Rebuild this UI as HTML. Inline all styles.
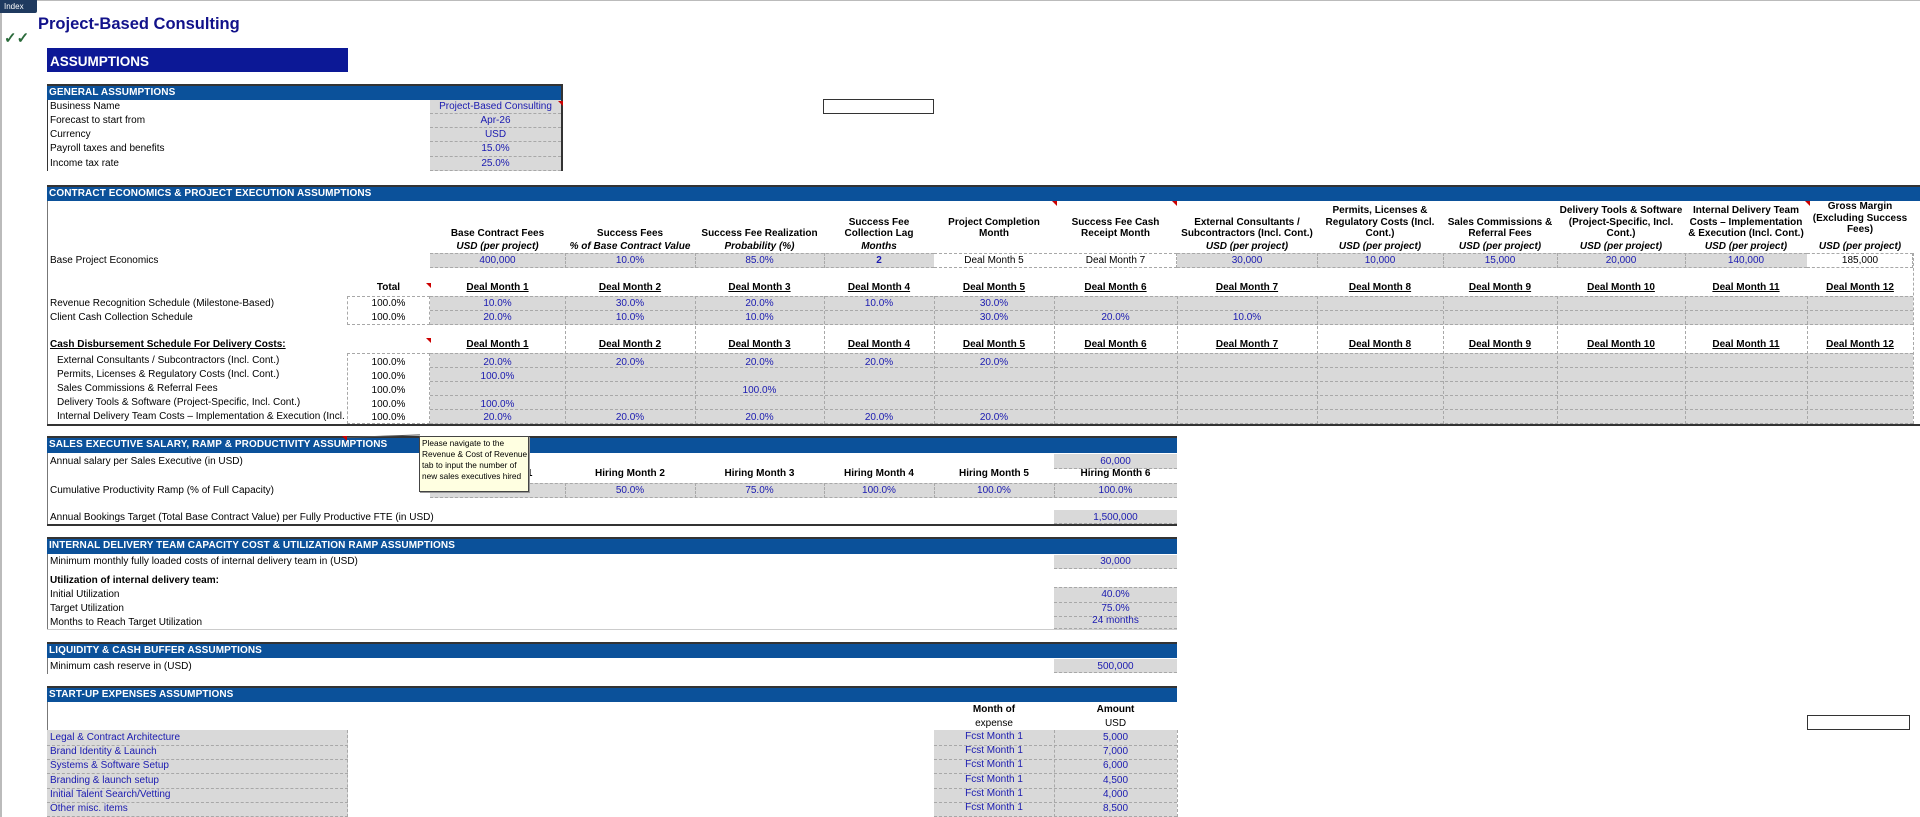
<!DOCTYPE html>
<html><head><meta charset="utf-8"><style>
*{margin:0;padding:0;box-sizing:border-box}
body{width:1920px;height:817px;background:#fff;position:relative;overflow:hidden;font-family:"Liberation Sans",Arial,sans-serif;font-size:10px;color:#000}
div{position:absolute}
.t{white-space:nowrap;line-height:14px;height:14px}
.c{text-align:center;white-space:nowrap;line-height:14px;height:14px}
.g{background:#d9d9d9;border-bottom:1px dashed #a8a8a8}
.w{background:#fff;border-bottom:1px dashed #a8a8a8;border-right:1px dashed #a8a8a8}
.b{color:#1a1ab0}
.h{background:#0b519a;color:#fff;font-weight:bold;line-height:14px;padding-left:2px;border-top:2px solid #333;letter-spacing:.1px}
.bd{font-weight:bold}
.u{font-weight:bold;text-decoration:underline}
.vl{width:0;border-left:1px dashed #a8a8a8}
.hd{display:flex;flex-direction:column;justify-content:flex-end;text-align:center;font-weight:bold;line-height:11.7px;white-space:nowrap}
.it{font-style:italic;font-weight:bold}
.tri{width:0;height:0;border-top:5px solid #c00;border-left:5px solid transparent}
</style></head><body>
<div style="left:0;top:0;width:2px;height:817px;background:#bbb"></div>
<div style="left:0;top:0;width:1920px;height:1px;background:#bbb"></div>
<div style="left:0;top:0;width:37px;height:13px;background:#1f3a5f;color:#fff;font-size:8px;line-height:13px;padding-left:4px;border-radius:0 0 2px 0">Index</div>
<div style="left:38px;top:14px;font-size:16.5px;font-weight:bold;color:#12128a;line-height:20px;white-space:nowrap">Project-Based Consulting</div>
<div style="left:4px;top:31px;font-size:15px;color:#2a6a3a;font-weight:bold;line-height:16px">✓✓</div>
<div style="left:47px;top:48px;width:301px;height:24px;background:#0c1896;color:#fff;font-size:13.5px;font-weight:bold;line-height:28px;padding-left:3px">ASSUMPTIONS</div>

<!-- empty boxes -->
<div style="left:823px;top:99px;width:111px;height:15px;border:1px solid #333"></div>
<div style="left:1807px;top:715px;width:103px;height:15px;border:1px solid #333"></div>

<!-- GENERAL -->
<div class="h" style="left:47px;top:84px;width:515px;height:16px">GENERAL ASSUMPTIONS</div>
<div style="left:47px;top:100px;width:1px;height:71px;background:#333"></div>
<div style="left:561px;top:84px;width:2px;height:87px;background:#333"></div>
<div class="g" style="left:430px;top:100px;width:131px;height:71px"></div>
<div class="t" style="left:50px;top:100px">Business Name</div><div class="c b" style="left:430px;top:100px;width:131px">Project-Based Consulting</div>
<div class="t" style="left:50px;top:114px">Forecast to start from</div><div class="c b" style="left:430px;top:114px;width:131px">Apr-26</div>
<div class="t" style="left:50px;top:128px">Currency</div><div class="c b" style="left:430px;top:128px;width:131px">USD</div>
<div class="t" style="left:50px;top:142px">Payroll taxes and benefits</div><div class="c b" style="left:430px;top:142px;width:131px">15.0%</div>
<div class="t" style="left:50px;top:157px">Income tax rate</div><div class="c b" style="left:430px;top:157px;width:131px">25.0%</div>
<div style="left:430px;top:113px;width:131px;border-top:1px dashed #a8a8a8"></div>
<div style="left:430px;top:127px;width:131px;border-top:1px dashed #a8a8a8"></div>
<div style="left:430px;top:141px;width:131px;border-top:1px dashed #a8a8a8"></div>
<div style="left:430px;top:156px;width:131px;border-top:1px dashed #a8a8a8"></div>

<!-- CONTRACT -->
<div class="h" style="left:47px;top:185px;width:1873px;height:16px">CONTRACT ECONOMICS &amp; PROJECT EXECUTION ASSUMPTIONS</div>
<div style="left:47px;top:201px;width:1px;height:224px;background:#777"></div>
<div style="left:47px;top:424px;width:1873px;height:2px;background:#333"></div>

<div class="hd" style="left:430px;top:190px;width:135px;height:50px">Base Contract Fees</div>
<div class="hd" style="left:565px;top:190px;width:130px;height:50px">Success Fees</div>
<div class="hd" style="left:695px;top:190px;width:129px;height:50px">Success Fee Realization</div>
<div class="hd" style="left:824px;top:190px;width:110px;height:50px">Success Fee<br>Collection Lag</div>
<div class="hd" style="left:934px;top:190px;width:120px;height:50px">Project Completion<br>Month</div>
<div class="hd" style="left:1054px;top:190px;width:123px;height:50px">Success Fee Cash<br>Receipt Month</div>
<div class="hd" style="left:1177px;top:190px;width:140px;height:50px">External Consultants /<br>Subcontractors (Incl. Cont.)</div>
<div class="hd" style="left:1317px;top:190px;width:126px;height:50px">Permits, Licenses &amp;<br>Regulatory Costs (Incl.<br>Cont.)</div>
<div class="hd" style="left:1443px;top:190px;width:114px;height:50px">Sales Commissions &amp;<br>Referral Fees</div>
<div class="hd" style="left:1557px;top:190px;width:128px;height:50px">Delivery Tools &amp; Software<br>(Project-Specific, Incl.<br>Cont.)</div>
<div class="hd" style="left:1685px;top:190px;width:122px;height:50px">Internal Delivery Team<br>Costs – Implementation<br>&amp; Execution (Incl. Cont.)</div>
<div class="hd" style="left:1807px;top:186px;width:106px;height:50px">Gross Margin<br>(Excluding Success<br>Fees)</div>

<div class="c it" style="left:430px;top:240px;width:135px">USD (per project)</div>
<div class="c it" style="left:565px;top:240px;width:130px">% of Base Contract Value</div>
<div class="c it" style="left:695px;top:240px;width:129px">Probability (%)</div>
<div class="c it" style="left:824px;top:240px;width:110px">Months</div>
<div class="c it" style="left:1177px;top:240px;width:140px">USD (per project)</div>
<div class="c it" style="left:1317px;top:240px;width:126px">USD (per project)</div>
<div class="c it" style="left:1443px;top:240px;width:114px">USD (per project)</div>
<div class="c it" style="left:1557px;top:240px;width:128px">USD (per project)</div>
<div class="c it" style="left:1685px;top:240px;width:122px">USD (per project)</div>
<div class="c it" style="left:1807px;top:240px;width:106px">USD (per project)</div>

<div class="t" style="left:50px;top:254px">Base Project Economics</div>
<div class="g" style="left:430px;top:253px;width:504px;height:15px;border-top:1px dashed #a8a8a8"></div>
<div class="w" style="left:934px;top:253px;width:243px;height:15px;border-top:1px dashed #a8a8a8"></div>
<div class="g" style="left:1177px;top:253px;width:630px;height:15px;border-top:1px dashed #a8a8a8"></div>
<div class="w" style="left:1807px;top:253px;width:106px;height:15px;border-top:1px dashed #a8a8a8"></div>
<div class="c b" style="left:430px;top:254px;width:135px">400,000</div>
<div class="c b" style="left:565px;top:254px;width:130px">10.0%</div>
<div class="c b" style="left:695px;top:254px;width:129px">85.0%</div>
<div class="c b bd" style="left:824px;top:254px;width:110px">2</div>
<div class="c" style="left:934px;top:254px;width:120px">Deal Month 5</div>
<div class="c" style="left:1054px;top:254px;width:123px">Deal Month 7</div>
<div class="c b" style="left:1177px;top:254px;width:140px">30,000</div>
<div class="c b" style="left:1317px;top:254px;width:126px">10,000</div>
<div class="c b" style="left:1443px;top:254px;width:114px">15,000</div>
<div class="c b" style="left:1557px;top:254px;width:128px">20,000</div>
<div class="c b" style="left:1685px;top:254px;width:122px">140,000</div>
<div class="c" style="left:1807px;top:254px;width:106px">185,000</div>
<div class="tri" style="left:1052px;top:201px"></div>
<div class="tri" style="left:1172px;top:201px"></div>
<div class="tri" style="left:1805px;top:201px"></div>
<div class="tri" style="left:426px;top:283px"></div>
<div class="tri" style="left:426px;top:338px"></div>
<div class="tri" style="left:558px;top:101px"></div>

<!-- Deal month headers row 1 -->
<div class="c bd" style="left:347px;top:281px;width:83px">Total</div>
<div class="c u" style="left:430px;top:281px;width:135px">Deal Month 1</div>
<div class="c u" style="left:565px;top:281px;width:130px">Deal Month 2</div>
<div class="c u" style="left:695px;top:281px;width:129px">Deal Month 3</div>
<div class="c u" style="left:824px;top:281px;width:110px">Deal Month 4</div>
<div class="c u" style="left:934px;top:281px;width:120px">Deal Month 5</div>
<div class="c u" style="left:1054px;top:281px;width:123px">Deal Month 6</div>
<div class="c u" style="left:1177px;top:281px;width:140px">Deal Month 7</div>
<div class="c u" style="left:1317px;top:281px;width:126px">Deal Month 8</div>
<div class="c u" style="left:1443px;top:281px;width:114px">Deal Month 9</div>
<div class="c u" style="left:1557px;top:281px;width:128px">Deal Month 10</div>
<div class="c u" style="left:1685px;top:281px;width:122px">Deal Month 11</div>
<div class="c u" style="left:1807px;top:281px;width:106px">Deal Month 12</div>

<div class="w" style="left:347px;top:296px;width:83px;height:29px;border-left:1px dashed #a8a8a8;border-top:1px dashed #a8a8a8"></div>
<div class="g" style="left:430px;top:296px;width:1483px;height:15px;border-top:1px dashed #a8a8a8"></div>
<div class="g" style="left:430px;top:311px;width:1483px;height:14px"></div>
<div class="t" style="left:50px;top:297px">Revenue Recognition Schedule (Milestone-Based)</div>
<div class="t" style="left:50px;top:311px">Client Cash Collection Schedule</div>
<div class="c" style="left:347px;top:297px;width:83px">100.0%</div>
<div class="c" style="left:347px;top:311px;width:83px">100.0%</div>
<div class="c b" style="left:430px;top:297px;width:135px">10.0%</div>
<div class="c b" style="left:565px;top:297px;width:130px">30.0%</div>
<div class="c b" style="left:695px;top:297px;width:129px">20.0%</div>
<div class="c b" style="left:824px;top:297px;width:110px">10.0%</div>
<div class="c b" style="left:934px;top:297px;width:120px">30.0%</div>
<div class="c b" style="left:430px;top:311px;width:135px">20.0%</div>
<div class="c b" style="left:565px;top:311px;width:130px">10.0%</div>
<div class="c b" style="left:695px;top:311px;width:129px">10.0%</div>
<div class="c b" style="left:934px;top:311px;width:120px">30.0%</div>
<div class="c b" style="left:1054px;top:311px;width:123px">20.0%</div>
<div class="c b" style="left:1177px;top:311px;width:140px">10.0%</div>

<!-- Cash disbursement -->
<div class="t u" style="left:50px;top:338px">Cash Disbursement Schedule For Delivery Costs:</div>
<div class="c u" style="left:430px;top:338px;width:135px">Deal Month 1</div>
<div class="c u" style="left:565px;top:338px;width:130px">Deal Month 2</div>
<div class="c u" style="left:695px;top:338px;width:129px">Deal Month 3</div>
<div class="c u" style="left:824px;top:338px;width:110px">Deal Month 4</div>
<div class="c u" style="left:934px;top:338px;width:120px">Deal Month 5</div>
<div class="c u" style="left:1054px;top:338px;width:123px">Deal Month 6</div>
<div class="c u" style="left:1177px;top:338px;width:140px">Deal Month 7</div>
<div class="c u" style="left:1317px;top:338px;width:126px">Deal Month 8</div>
<div class="c u" style="left:1443px;top:338px;width:114px">Deal Month 9</div>
<div class="c u" style="left:1557px;top:338px;width:128px">Deal Month 10</div>
<div class="c u" style="left:1685px;top:338px;width:122px">Deal Month 11</div>
<div class="c u" style="left:1807px;top:338px;width:106px">Deal Month 12</div>

<div class="w" style="left:347px;top:353px;width:83px;height:71px;border-left:1px dashed #a8a8a8;border-top:1px dashed #a8a8a8"></div>
<div class="g" style="left:430px;top:353px;width:1483px;height:15px;border-top:1px dashed #a8a8a8"></div>
<div class="g" style="left:430px;top:368px;width:1483px;height:14px"></div>
<div class="g" style="left:430px;top:382px;width:1483px;height:14px"></div>
<div class="g" style="left:430px;top:396px;width:1483px;height:14px"></div>
<div class="g" style="left:430px;top:410px;width:1483px;height:14px"></div>
<div class="t" style="left:57px;top:354px">External Consultants / Subcontractors (Incl. Cont.)</div>
<div class="t" style="left:57px;top:368px">Permits, Licenses &amp; Regulatory Costs (Incl. Cont.)</div>
<div class="t" style="left:57px;top:382px">Sales Commissions &amp; Referral Fees</div>
<div class="t" style="left:57px;top:396px">Delivery Tools &amp; Software (Project-Specific, Incl. Cont.)</div>
<div class="t" style="left:57px;top:410px;width:290px;overflow:hidden">Internal Delivery Team Costs – Implementation &amp; Execution (Incl. Cont.)</div>
<div class="c" style="left:347px;top:356px;width:83px">100.0%</div>
<div class="c" style="left:347px;top:370px;width:83px">100.0%</div>
<div class="c" style="left:347px;top:384px;width:83px">100.0%</div>
<div class="c" style="left:347px;top:398px;width:83px">100.0%</div>
<div class="c" style="left:347px;top:411px;width:83px">100.0%</div>
<div class="c b" style="left:430px;top:356px;width:135px">20.0%</div>
<div class="c b" style="left:565px;top:356px;width:130px">20.0%</div>
<div class="c b" style="left:695px;top:356px;width:129px">20.0%</div>
<div class="c b" style="left:824px;top:356px;width:110px">20.0%</div>
<div class="c b" style="left:934px;top:356px;width:120px">20.0%</div>
<div class="c b" style="left:430px;top:370px;width:135px">100.0%</div>
<div class="c b" style="left:695px;top:384px;width:129px">100.0%</div>
<div class="c b" style="left:430px;top:398px;width:135px">100.0%</div>
<div class="c b" style="left:430px;top:411px;width:135px">20.0%</div>
<div class="c b" style="left:565px;top:411px;width:130px">20.0%</div>
<div class="c b" style="left:695px;top:411px;width:129px">20.0%</div>
<div class="c b" style="left:824px;top:411px;width:110px">20.0%</div>
<div class="c b" style="left:934px;top:411px;width:120px">20.0%</div>

<!-- vertical dashed dividers -->
<div class="vl" style="left:565px;top:296px;height:128px"></div>
<div class="vl" style="left:695px;top:296px;height:128px"></div>
<div class="vl" style="left:824px;top:296px;height:128px"></div>
<div class="vl" style="left:934px;top:296px;height:128px"></div>
<div class="vl" style="left:1054px;top:296px;height:128px"></div>
<div class="vl" style="left:1177px;top:296px;height:128px"></div>
<div class="vl" style="left:1317px;top:296px;height:128px"></div>
<div class="vl" style="left:1443px;top:296px;height:128px"></div>
<div class="vl" style="left:1557px;top:296px;height:128px"></div>
<div class="vl" style="left:1685px;top:296px;height:128px"></div>
<div class="vl" style="left:1807px;top:296px;height:128px"></div>
<div class="vl" style="left:1913px;top:253px;height:171px"></div>
<div class="vl" style="left:565px;top:253px;height:15px"></div>
<div class="vl" style="left:695px;top:253px;height:15px"></div>
<div class="vl" style="left:824px;top:253px;height:15px"></div>
<div class="vl" style="left:1317px;top:253px;height:15px"></div>
<div class="vl" style="left:1443px;top:253px;height:15px"></div>
<div class="vl" style="left:1557px;top:253px;height:15px"></div>
<div class="vl" style="left:1685px;top:253px;height:15px"></div>

<!-- SALES -->
<div class="h" style="left:47px;top:436px;width:1130px;height:17px">SALES EXECUTIVE SALARY, RAMP &amp; PRODUCTIVITY ASSUMPTIONS</div>
<div style="left:47px;top:453px;width:1px;height:72px;background:#777"></div>
<div style="left:47px;top:524px;width:1130px;height:2px;background:#333"></div>
<div class="t" style="left:50px;top:455px">Annual salary per Sales Executive (in USD)</div>
<div class="g" style="left:1054px;top:454px;width:123px;height:15px"></div>
<div class="c b" style="left:1054px;top:455px;width:123px">60,000</div>
<div class="c bd" style="left:430px;top:467px;width:135px">Hiring Month 1</div>
<div class="c bd" style="left:565px;top:467px;width:130px">Hiring Month 2</div>
<div class="c bd" style="left:695px;top:467px;width:129px">Hiring Month 3</div>
<div class="c bd" style="left:824px;top:467px;width:110px">Hiring Month 4</div>
<div class="c bd" style="left:934px;top:467px;width:120px">Hiring Month 5</div>
<div class="c bd" style="left:1054px;top:467px;width:123px">Hiring Month 6</div>
<div class="g" style="left:430px;top:483px;width:747px;height:15px;border-top:1px dashed #a8a8a8"></div>
<div class="vl" style="left:565px;top:483px;height:15px"></div>
<div class="vl" style="left:695px;top:483px;height:15px"></div>
<div class="vl" style="left:824px;top:483px;height:15px"></div>
<div class="vl" style="left:934px;top:483px;height:15px"></div>
<div class="vl" style="left:1054px;top:483px;height:15px"></div>
<div class="t" style="left:50px;top:484px">Cumulative Productivity Ramp (% of Full Capacity)</div>
<div class="c b" style="left:430px;top:484px;width:135px">25.0%</div>
<div class="c b" style="left:565px;top:484px;width:130px">50.0%</div>
<div class="c b" style="left:695px;top:484px;width:129px">75.0%</div>
<div class="c b" style="left:824px;top:484px;width:110px">100.0%</div>
<div class="c b" style="left:934px;top:484px;width:120px">100.0%</div>
<div class="c b" style="left:1054px;top:484px;width:123px">100.0%</div>
<div class="t" style="left:50px;top:511px">Annual Bookings Target (Total Base Contract Value) per Fully Productive FTE (in USD)</div>
<div class="g" style="left:1054px;top:510px;width:123px;height:14px"></div>
<div class="c b" style="left:1054px;top:511px;width:123px">1,500,000</div>
<!-- tooltip -->
<div style="left:346px;top:437px;width:74px;height:1px;background:#555;transform:rotate(-2deg);transform-origin:left"></div>
<div class="tri" style="left:342px;top:436px"></div>
<div style="left:419px;top:436px;width:110px;height:56px;background:#ffffe1;border:1px solid #444;box-shadow:1px 1px 0 #999;font-size:8.3px;line-height:11px;padding:1px 2px;white-space:nowrap;overflow:hidden">Please navigate to the<br>Revenue &amp; Cost of Revenue<br>tab to input the number of<br>new sales executives hired</div>

<!-- INTERNAL DELIVERY -->
<div class="h" style="left:47px;top:537px;width:1130px;height:17px">INTERNAL DELIVERY TEAM CAPACITY COST &amp; UTILIZATION RAMP ASSUMPTIONS</div>
<div style="left:47px;top:554px;width:1px;height:76px;background:#777"></div>
<div style="left:47px;top:629px;width:1130px;height:1px;background:#ccc"></div>
<div class="t" style="left:50px;top:555px">Minimum monthly fully loaded costs of internal delivery team in (USD)</div>
<div class="g" style="left:1054px;top:555px;width:123px;height:14px"></div>
<div class="c b" style="left:1054px;top:555px;width:123px">30,000</div>
<div class="t bd" style="left:50px;top:574px">Utilization of internal delivery team:</div>
<div class="g" style="left:1054px;top:587px;width:123px;height:42px;border-top:1px dashed #a8a8a8"></div>
<div style="left:1054px;top:602px;width:123px;border-top:1px dashed #a8a8a8"></div>
<div style="left:1054px;top:616px;width:123px;border-top:1px dashed #a8a8a8"></div>
<div class="t" style="left:50px;top:588px">Initial Utilization</div><div class="c b" style="left:1054px;top:588px;width:123px">40.0%</div>
<div class="t" style="left:50px;top:602px">Target Utilization</div><div class="c b" style="left:1054px;top:602px;width:123px">75.0%</div>
<div class="t" style="left:50px;top:616px">Months to Reach Target Utilization</div><div class="c b" style="left:1054px;top:614px;width:123px">24 months</div>

<!-- LIQUIDITY -->
<div class="h" style="left:47px;top:642px;width:1130px;height:16px">LIQUIDITY &amp; CASH BUFFER ASSUMPTIONS</div>
<div style="left:47px;top:658px;width:1px;height:16px;background:#777"></div>
<div class="t" style="left:50px;top:660px">Minimum cash reserve in (USD)</div>
<div class="g" style="left:1054px;top:659px;width:123px;height:14px"></div>
<div class="c b" style="left:1054px;top:660px;width:123px">500,000</div>

<!-- START-UP -->
<div class="h" style="left:47px;top:686px;width:1130px;height:16px">START-UP EXPENSES ASSUMPTIONS</div>
<div style="left:47px;top:702px;width:1px;height:115px;background:#777"></div>
<div class="c bd" style="left:934px;top:703px;width:120px">Month of</div>
<div class="c" style="left:934px;top:717px;width:120px">expense</div>
<div class="c bd" style="left:1054px;top:703px;width:123px">Amount</div>
<div class="c" style="left:1054px;top:717px;width:123px">USD</div>
<div class="g" style="left:47px;top:730px;width:301px;height:87px;border-right:1px dashed #a8a8a8"></div>
<div class="g" style="left:934px;top:730px;width:243px;height:87px"></div>
<div class="vl" style="left:1054px;top:730px;height:87px"></div>
<div class="vl" style="left:1177px;top:730px;height:87px"></div>
<div style="left:47px;top:745px;width:301px;border-top:1px dashed #a8a8a8"></div>
<div style="left:47px;top:759px;width:301px;border-top:1px dashed #a8a8a8"></div>
<div style="left:47px;top:773px;width:301px;border-top:1px dashed #a8a8a8"></div>
<div style="left:47px;top:788px;width:301px;border-top:1px dashed #a8a8a8"></div>
<div style="left:47px;top:802px;width:301px;border-top:1px dashed #a8a8a8"></div>
<div style="left:934px;top:745px;width:243px;border-top:1px dashed #a8a8a8"></div>
<div style="left:934px;top:759px;width:243px;border-top:1px dashed #a8a8a8"></div>
<div style="left:934px;top:773px;width:243px;border-top:1px dashed #a8a8a8"></div>
<div style="left:934px;top:788px;width:243px;border-top:1px dashed #a8a8a8"></div>
<div style="left:934px;top:802px;width:243px;border-top:1px dashed #a8a8a8"></div>
<div class="t b" style="left:50px;top:731px">Legal &amp; Contract Architecture</div>
<div class="t b" style="left:50px;top:745px">Brand Identity &amp; Launch</div>
<div class="t b" style="left:50px;top:759px">Systems &amp; Software Setup</div>
<div class="t b" style="left:50px;top:774px">Branding &amp; launch setup</div>
<div class="t b" style="left:50px;top:788px">Initial Talent Search/Vetting</div>
<div class="t b" style="left:50px;top:802px">Other misc. items</div>
<div class="c b" style="left:934px;top:730px;width:120px">Fcst Month 1</div><div class="c b" style="left:1054px;top:731px;width:123px">5,000</div>
<div class="c b" style="left:934px;top:744px;width:120px">Fcst Month 1</div><div class="c b" style="left:1054px;top:745px;width:123px">7,000</div>
<div class="c b" style="left:934px;top:758px;width:120px">Fcst Month 1</div><div class="c b" style="left:1054px;top:759px;width:123px">6,000</div>
<div class="c b" style="left:934px;top:773px;width:120px">Fcst Month 1</div><div class="c b" style="left:1054px;top:774px;width:123px">4,500</div>
<div class="c b" style="left:934px;top:787px;width:120px">Fcst Month 1</div><div class="c b" style="left:1054px;top:788px;width:123px">4,000</div>
<div class="c b" style="left:934px;top:801px;width:120px">Fcst Month 1</div><div class="c b" style="left:1054px;top:802px;width:123px">8,500</div>
</body></html>
